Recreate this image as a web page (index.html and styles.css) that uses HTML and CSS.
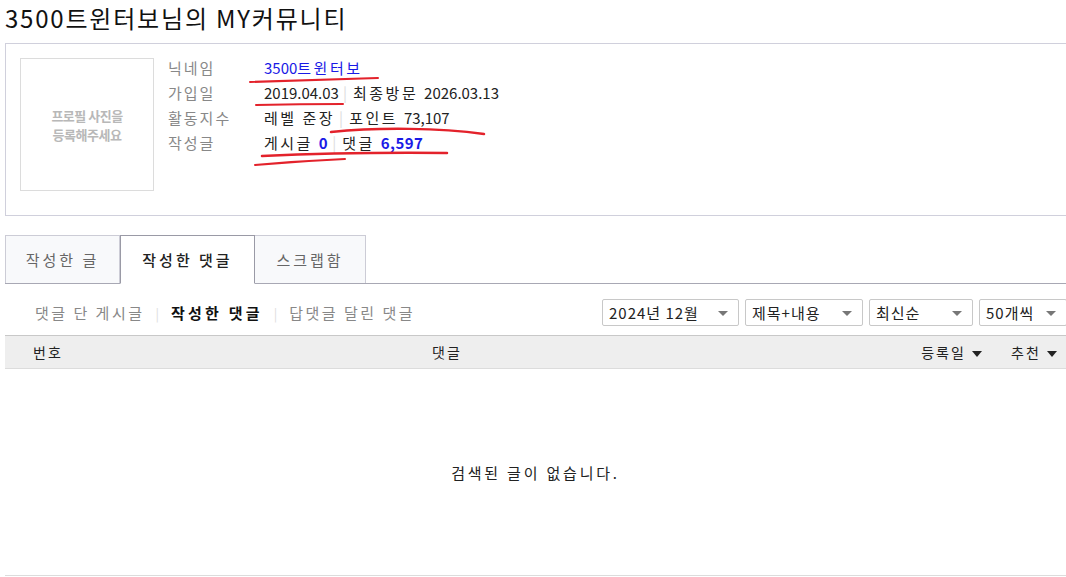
FILE: index.html
```html
<html>
    <head>
        <meta charset="utf-8">
        <link rel="stylesheet" href="styles.css">
    </head>
    <body>
        <div class="page">
            <h2 class="title">3500트윈터보님의 MY커뮤니티</h2>

            <div class="profile">
                <div class="thumb">프로필 사진을<br>등록해주세요</div>
                <div class="info">
                    <div class="row"><span class="label">닉네임</span><span class="value"><a class="nick" href="#"><span class="num">3500</span>트윈터보</a></span></div>
                    <div class="row"><span class="label">가입일</span><span class="value"><span class="num">2019.04.03</span><i class="sep">|</i>최종방문 <span class="num">2026.03.13</span></span></div>
                    <div class="row"><span class="label">활동지수</span><span class="value">레벨 준장<i class="sep">|</i>포인트 <span class="num">73,107</span></span></div>
                    <div class="row"><span class="label">작성글</span><span class="value">게시글 <b class="count">0</b><i class="sep">|</i>댓글 <b class="count">6,597</b></span></div>
                </div>
            </div>

            <ul class="tabs">
                <li class="tab">작성한 글</li>
                <li class="tab on">작성한 댓글</li>
                <li class="tab">스크랩함</li>
            </ul>

            <div class="toolbar">
                <div class="subnav">
                    <a href="#">댓글 단 게시글</a><i class="sep">|</i><a href="#" class="on">작성한 댓글</a><i class="sep">|</i><a href="#">답댓글 달린 댓글</a>
                </div>
                <div class="filters">
                    <div class="select w-month">2024년 12월<span class="caret"></span></div>
                    <div class="select w-field">제목+내용<span class="caret"></span></div>
                    <div class="select w-sort">최신순<span class="caret"></span></div>
                    <div class="select w-count">50개씩<span class="caret"></span></div>
                </div>
            </div>

            <div class="list-head">
                <div class="col-num">번호</div>
                <div class="col-text">댓글</div>
                <div class="col-date">등록일 <span class="down"></span></div>
                <div class="col-like">추천 <span class="down"></span></div>
            </div>
            <div class="empty">검색된 글이 없습니다.</div>

            <svg class="marks" width="1066" height="577" viewBox="0 0 1066 577">
                <g fill="none" stroke="#e3222b" stroke-width="2" stroke-linecap="round">
                    <path d="M250 82 Q315 80 378 78"/>
                    <path d="M256 105 Q300 104 343 104"/>
                    <path d="M331 132 C380 127 440 128 484 134" stroke-width="2.5"/>
                    <path d="M262 156 Q350 152 447 153" stroke-width="2.5"/>
                    <path d="M255 165 Q300 161 345 159"/>
                </g>
            </svg>
        </div>
    </body>
</html>
```

FILE: styles.css
```css
html, body {
    margin: 0;
    overflow: hidden;
    background: #fff;
}
body {
    font-family: "Noto Sans CJK KR", "Noto Sans", sans-serif;
    color: #222;
}
.page {
    position: relative;
    width: 1063px;
    padding-left: 5px;
}
a {
    text-decoration: none;
    color: inherit;
}
i.sep {
    font-style: normal;
    color: #ddd;
    letter-spacing: 0;
    margin: 0 6px 0 4px;
}
.num {
    letter-spacing: 0;
}

.title {
    margin: 0 0 7px;
    font-size: 24px;
    font-weight: normal;
    line-height: 36px;
    color: #111;
    letter-spacing: 1.8px;
}

/* profile box */
.profile {
    display: flex;
    border: 1px solid #d0d0dc;
    padding: 14px 14px 24px;
}
.thumb {
    width: 132px;
    height: 131px;
    border: 1px solid #dcdcdc;
    display: flex;
    align-items: center;
    justify-content: center;
    text-align: center;
    font-size: 13px;
    font-weight: bold;
    line-height: 19px;
    color: #b8b8b8;
    letter-spacing: -0.5px;
}
.info {
    margin: -3px 0 0 14px;
}
.row {
    display: flex;
    font-size: 15px;
    line-height: 25px;
}
.label {
    width: 96px;
    color: #888;
    letter-spacing: 2px;
}
.value {
    color: #222;
    letter-spacing: 2.5px;
}
.nick {
    color: #1a1ae6;
}
.count {
    color: #1a1ae6;
    letter-spacing: 0.5px;
}

/* tabs */
.tabs {
    list-style: none;
    margin: 19px 0 0;
    padding: 0;
    display: flex;
    border-bottom: 1px solid #a8a8b4;
}
.tab {
    height: 47px;
    line-height: 47px;
    text-align: center;
    font-size: 15px;
    color: #666;
    background: #f8f9fb;
    border: 1px solid #ccccd6;
    border-bottom: none;
    width: 113px;
    letter-spacing: 3px;
}
.tab + .tab {
    border-left: none;
}
.tab.on {
    width: 133px;
    background: #fff;
    color: #222;
    border: 1px solid #9a9aa6;
    border-bottom: 1px solid #fff;
    margin-bottom: -1px;
    font-weight: 500;
}
.tab.on + .tab {
    width: 110px;
}

/* sub menu + filters */
.toolbar {
    display: flex;
    justify-content: space-between;
    align-items: center;
    padding: 15px 1px 9px 0;
}
.subnav {
    padding-left: 30px;
    font-size: 15px;
    color: #888;
    letter-spacing: 2.5px;
}
.subnav .sep {
    margin: 0 12px 0 11px;
    font-size: 13px;
}
.subnav .on {
    color: #111;
    font-weight: bold;
    letter-spacing: 3.2px;
}
.filters {
    display: flex;
    gap: 6px;
}
.select {
    position: relative;
    height: 27px;
    line-height: 25px;
    border: 1px solid #c8c8c8;
    border-radius: 2px;
    padding-left: 6px;
    font-size: 15px;
    color: #222;
    box-sizing: border-box;
    letter-spacing: 1px;
}
.w-month { width: 137px; }
.w-field { width: 118px; }
.w-sort { width: 104px; }
.w-count { width: 88px; }
.caret {
    position: absolute;
    right: 10px;
    top: 11px;
    border-left: 5px solid transparent;
    border-right: 5px solid transparent;
    border-top: 5px solid #777;
}

/* list */
.list-head {
    display: grid;
    grid-template-columns: 60px 764px 161px 1fr;
    border-top: 1px solid #c8c8c8;
    border-bottom: 1px solid #dcdcdc;
    background: #eeeeee;
    height: 32px;
    line-height: 32px;
    font-size: 14px;
    color: #222;
    letter-spacing: 2px;
}
.col-num {
    padding-left: 28px;
    white-space: nowrap;
}
.col-text {
    text-align: center;
}
.col-date {
    text-align: right;
    padding-right: 8px;
}
.col-like {
    text-align: right;
    padding-right: 11px;
}
.down {
    display: inline-block;
    margin-left: 1px;
    vertical-align: middle;
    border-left: 5px solid transparent;
    border-right: 5px solid transparent;
    border-top: 6px solid #222;
}
.empty {
    height: 206px;
    display: flex;
    align-items: center;
    justify-content: center;
    border-bottom: 1px solid #dcdcdc;
    font-size: 15px;
    letter-spacing: 2.8px;
    width: 1061px;
}

.marks {
    position: absolute;
    left: 0;
    top: 0;
    pointer-events: none;
}
```
